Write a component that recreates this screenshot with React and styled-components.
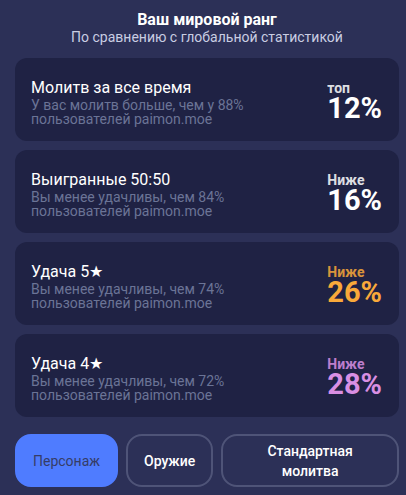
import React from "react";
import styled, { createGlobalStyle } from "styled-components";

const GlobalStyle = createGlobalStyle`
  html, body {
    margin: 0;
    padding: 0;
    background: #2c3057;
    font-family: Roboto, "Noto Sans", "Liberation Sans", sans-serif;
  }
`;

const Page = styled.div`
  width: 406px;
  height: 495px;
  box-sizing: border-box;
  padding: 10px 7px 0 15px;
  display: flex;
  flex-direction: column;
  overflow: hidden;
`;

const Header = styled.div`
  display: flex;
  flex-direction: column;
  align-items: center;
  padding-bottom: 14px;
`;

const Title = styled.h2`
  margin: 0;
  font-size: 16px;
  line-height: 20px;
  font-weight: 700;
  color: #ffffff;
`;

const Subtitle = styled.p`
  margin: 0;
  font-size: 14px;
  line-height: 14px;
  color: #c9cde2;
`;

const List = styled.div`
  display: flex;
  flex-direction: column;
  gap: 9px;
  width: 384px;
`;

const Card = styled.div`
  background: #1f2244;
  border-radius: 12px;
  height: 83px;
  box-sizing: border-box;
  padding: 0 17px 0 16px;
  display: flex;
  align-items: center;
  justify-content: space-between;
`;

const Info = styled.div`
  display: flex;
  flex-direction: column;
  padding-top: 4px;
`;

const CardTitle = styled.div`
  font-size: 16px;
  line-height: 20px;
  color: #ffffff;
`;

const Desc = styled.div`
  font-size: 14px;
  line-height: 14px;
  color: #6b7496;
  max-width: 230px;
`;

const Rank = styled.div`
  display: flex;
  flex-direction: column;
  align-items: flex-start;
  color: ${(p) => p.$color};
  padding-top: 2px;
`;

const RankLabel = styled.span`
  font-size: 14px;
  line-height: 15px;
  font-weight: 700;
  opacity: 0.85;
`;

const RankValue = styled.span`
  font-size: 29px;
  line-height: 25px;
  font-weight: 700;
`;

const Tabs = styled.div`
  display: flex;
  gap: 8px;
  width: 384px;
  margin-top: 17px;
`;

const Tab = styled.button`
  height: 53px;
  box-sizing: border-box;
  border-radius: 16px;
  border: 2px solid ${(p) => (p.$active ? "#4f7cff" : "#4f5478")};
  background: ${(p) => (p.$active ? "#4f7cff" : "transparent")};
  color: ${(p) => (p.$active ? "#363c66" : "#ffffff")};
  font-family: inherit;
  font-size: 14px;
  line-height: 20px;
  font-weight: ${(p) => (p.$active ? 400 : 500)};
  padding: 0 16px;
  flex: ${(p) => (p.$grow ? 1 : "none")};
  text-align: center;
`;

const stats = [
  {
    title: "Молитв за все время",
    desc: "У вас молитв больше, чем у 88% пользователей paimon.moe",
    label: "топ",
    value: "12%",
    color: "#ffffff",
  },
  {
    title: "Выигранные 50:50",
    desc: "Вы менее удачливы, чем 84% пользователей paimon.moe",
    label: "Ниже",
    value: "16%",
    color: "#ffffff",
  },
  {
    title: "Удача 5★",
    desc: "Вы менее удачливы, чем 74% пользователей paimon.moe",
    label: "Ниже",
    value: "26%",
    color: "#f9a93a",
  },
  {
    title: "Удача 4★",
    desc: "Вы менее удачливы, чем 72% пользователей paimon.moe",
    label: "Ниже",
    value: "28%",
    color: "#d98fe3",
  },
];

export default function App() {
  return (
    <>
      <GlobalStyle />
      <Page>
        <Header>
          <Title>Ваш мировой ранг</Title>
          <Subtitle>По сравнению с глобальной статистикой</Subtitle>
        </Header>
        <List>
          {stats.map((s) => (
            <Card key={s.title}>
              <Info>
                <CardTitle>{s.title}</CardTitle>
                <Desc>{s.desc}</Desc>
              </Info>
              <Rank $color={s.color}>
                <RankLabel>{s.label}</RankLabel>
                <RankValue>{s.value}</RankValue>
              </Rank>
            </Card>
          ))}
        </List>
        <Tabs>
          <Tab $active>Персонаж</Tab>
          <Tab>Оружие</Tab>
          <Tab $grow>
            Стандартная
            <br />
            молитва
          </Tab>
        </Tabs>
      </Page>
    </>
  );
}
